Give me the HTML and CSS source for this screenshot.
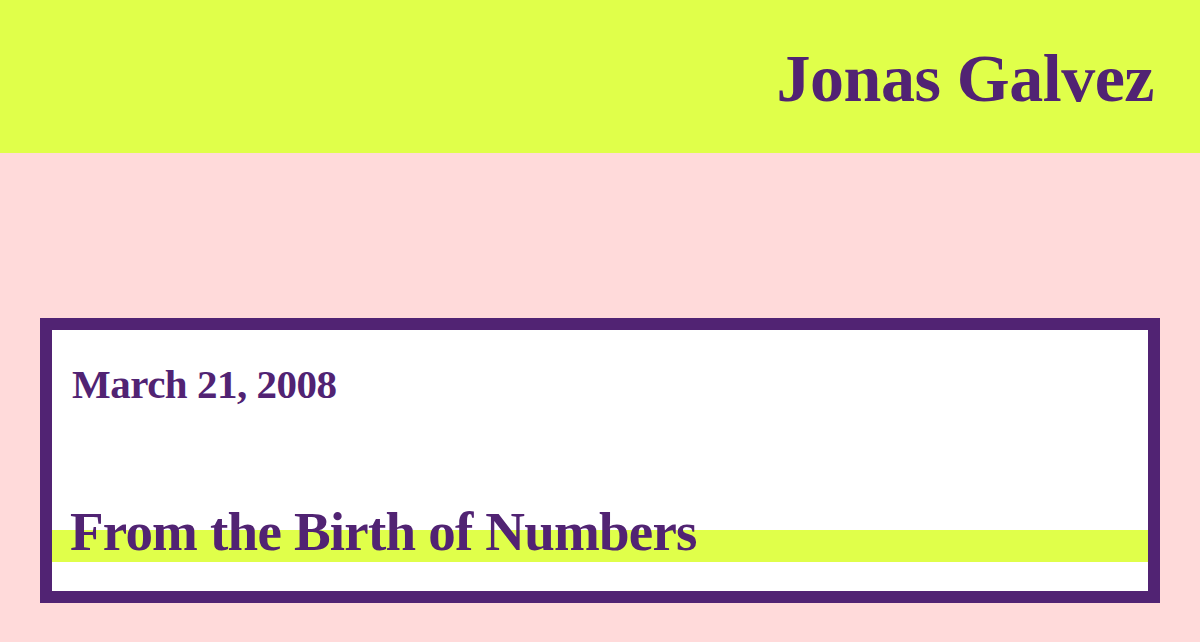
FILE: index.html
```html
<!DOCTYPE html>
<html>
<head>
<meta charset="utf-8">
<title>Jonas Galvez</title>
<link rel="stylesheet" href="styles.css">
</head>
<body>
<header class="site-header">
  <h1 class="site-title">Jonas Galvez</h1>
</header>
<main class="post">
  <p class="post-date">March 21, 2008</p>
  <h2 class="post-title">From the Birth of Numbers</h2>
</main>
</body>
</html>
```
FILE: styles.css
```css
html, body {
  margin: 0;
  padding: 0;
}
body {
  background: #ffdada;
  font-family: "Liberation Serif", "Times New Roman", serif;
  color: #512373;
}
.site-header {
  background: #e0ff4a;
  height: 153px;
  box-sizing: border-box;
  padding: 38px 46px 0 0;
  text-align: right;
}
.site-title {
  margin: 0;
  font-size: 68px;
  line-height: 80px;
  font-weight: bold;
  letter-spacing: -0.5px;
}
.post {
  margin: 165px 40px 0;
  border: 12px solid #512373;
  background: #fff;
  padding: 30px 0 29px;
}
.post-date {
  margin: 0;
  padding-left: 20px;
  font-size: 41px;
  line-height: 48px;
  font-weight: bold;
  letter-spacing: -0.5px;
}
.post-title {
  margin: 94px 0 0;
  padding-left: 18px;
  font-size: 55px;
  line-height: 60px;
  font-weight: bold;
  letter-spacing: -0.8px;
  background: linear-gradient(to bottom, transparent 28px, #e0ff4a 28px);
}
```
